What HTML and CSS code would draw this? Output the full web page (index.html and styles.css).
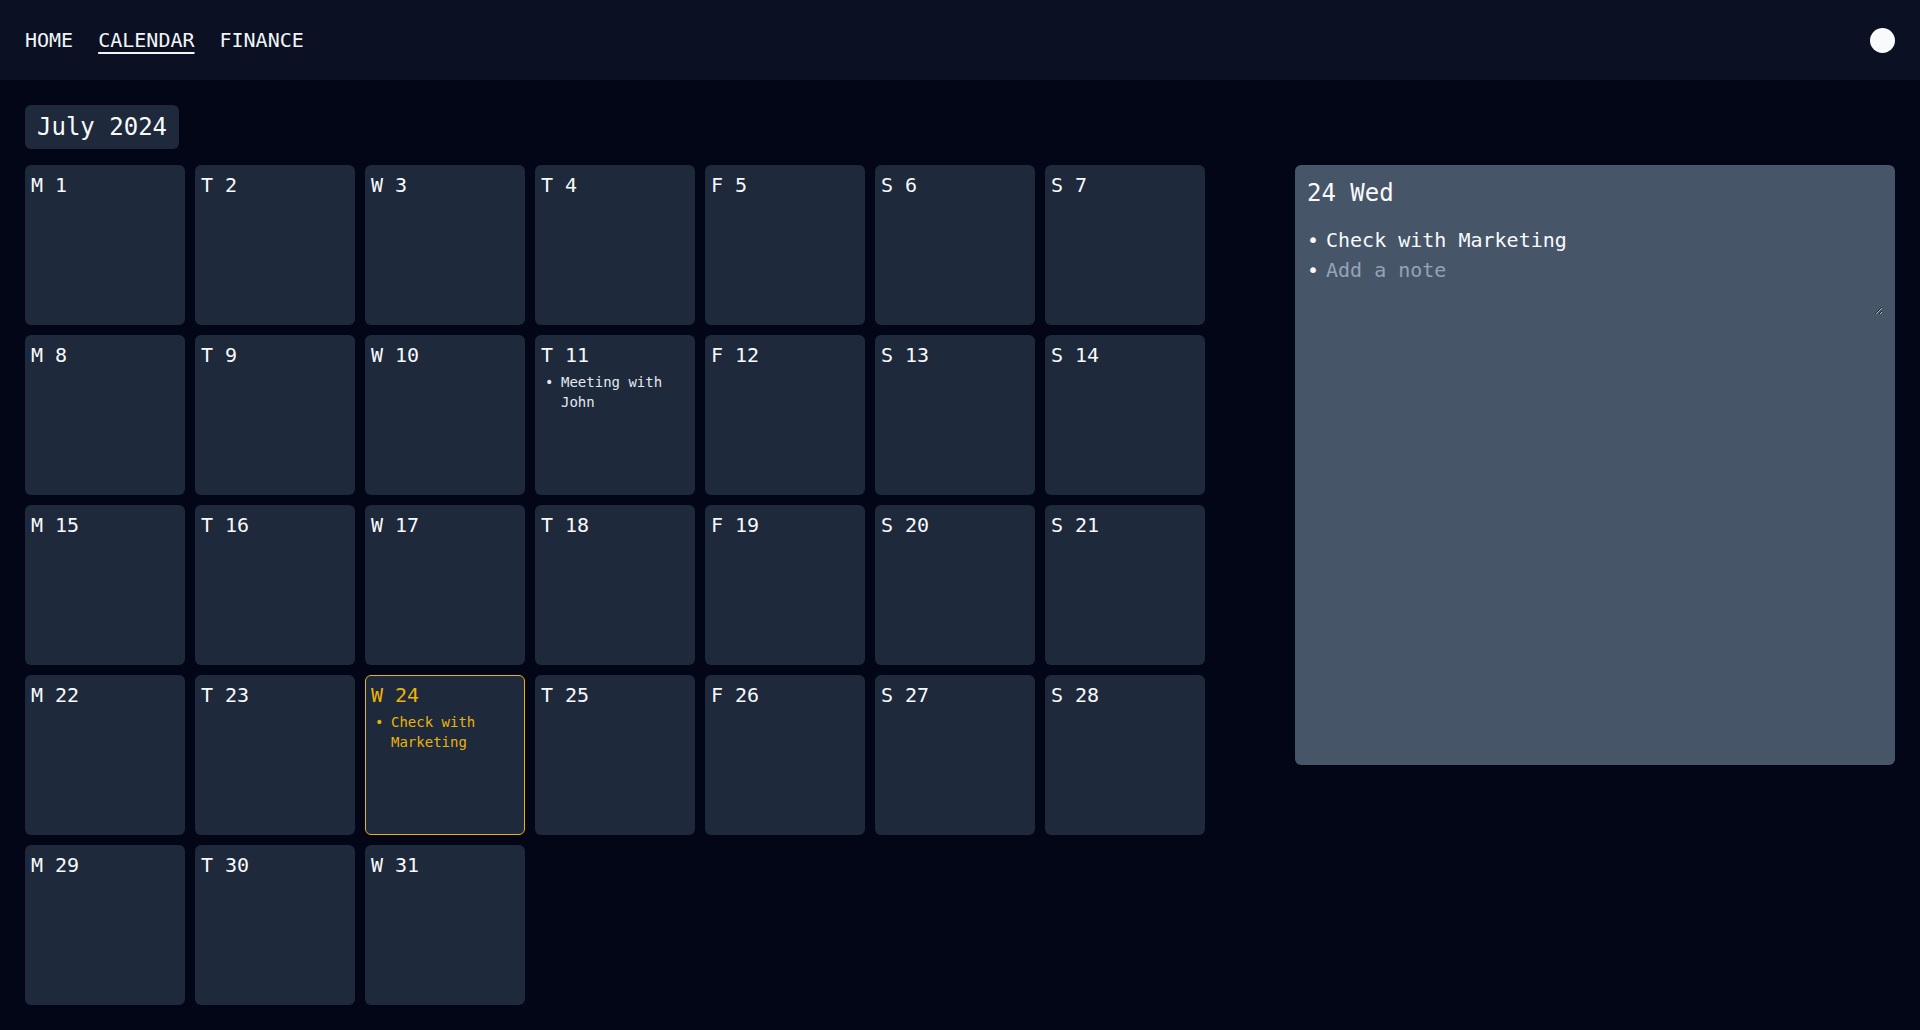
FILE: index.html
```html
<!DOCTYPE html>
<html lang="en">
  <head>
    <meta charset="UTF-8" />
    <title>Calendar</title>
    <link rel="stylesheet" href="styles.css">
  </head>
  <body>
    <!-- Top navigation -->
    <div id="header">
      <nav class="nav">
        <a href="#">HOME</a>
        <a href="#" class="active">CALENDAR</a>
        <a href="#">FINANCE</a>
      </nav>
      <div class="avatar"></div>
    </div>

    <div id="main">
      <div class="month">July 2024</div>

      <div class="layout">
        <div class="grid">
          <div class="day"><div class="day-title">M 1</div></div>
          <div class="day"><div class="day-title">T 2</div></div>
          <div class="day"><div class="day-title">W 3</div></div>
          <div class="day"><div class="day-title">T 4</div></div>
          <div class="day"><div class="day-title">F 5</div></div>
          <div class="day"><div class="day-title">S 6</div></div>
          <div class="day"><div class="day-title">S 7</div></div>

          <div class="day"><div class="day-title">M 8</div></div>
          <div class="day"><div class="day-title">T 9</div></div>
          <div class="day"><div class="day-title">W 10</div></div>
          <div class="day">
            <div class="day-title">T 11</div>
            <ul class="events">
              <li>Meeting with John</li>
            </ul>
          </div>
          <div class="day"><div class="day-title">F 12</div></div>
          <div class="day"><div class="day-title">S 13</div></div>
          <div class="day"><div class="day-title">S 14</div></div>

          <div class="day"><div class="day-title">M 15</div></div>
          <div class="day"><div class="day-title">T 16</div></div>
          <div class="day"><div class="day-title">W 17</div></div>
          <div class="day"><div class="day-title">T 18</div></div>
          <div class="day"><div class="day-title">F 19</div></div>
          <div class="day"><div class="day-title">S 20</div></div>
          <div class="day"><div class="day-title">S 21</div></div>

          <div class="day"><div class="day-title">M 22</div></div>
          <div class="day"><div class="day-title">T 23</div></div>
          <div class="day selected">
            <div class="day-title">W 24</div>
            <ul class="events">
              <li>Check with Marketing</li>
            </ul>
          </div>
          <div class="day"><div class="day-title">T 25</div></div>
          <div class="day"><div class="day-title">F 26</div></div>
          <div class="day"><div class="day-title">S 27</div></div>
          <div class="day"><div class="day-title">S 28</div></div>

          <div class="day"><div class="day-title">M 29</div></div>
          <div class="day"><div class="day-title">T 30</div></div>
          <div class="day"><div class="day-title">W 31</div></div>
        </div>

        <!-- Detail panel for the selected day -->
        <div class="panel">
          <h2>24 Wed</h2>
          <ul class="notes">
            <li>Check with Marketing</li>
            <li><textarea placeholder="Add a note"></textarea></li>
          </ul>
        </div>
      </div>
    </div>
  </body>
</html>
```

FILE: styles.css
```css
body {
  font-family: "DejaVu Sans Mono", "Liberation Mono", monospace;
  background-color: #020617;
  color: #f8fafc;
  margin: 0;
}
/* Header */
#header {
  height: 80px;
  padding: 0 25px;
  background-color: #0b1122;
  display: flex;
  align-items: center;
  justify-content: space-between;
}
.nav {
  display: flex;
  gap: 25px;
  font-size: 20px;
  line-height: 28px;
}
.nav a {
  color: #f1f5f9;
  text-decoration: none;
}
.nav a.active {
  text-decoration: underline;
  text-decoration-thickness: 2px;
  text-underline-offset: 5px;
}
.avatar {
  width: 25px;
  height: 25px;
  border-radius: 50%;
  background-color: #f8fafc;
}
#main {
  padding: 25px;
}
.month {
  display: inline-block;
  background-color: #1e293b;
  border-radius: 6px;
  padding: 6px 12px;
  font-size: 24px;
  line-height: 32px;
}
.layout {
  margin-top: 16px;
  display: flex;
  justify-content: space-between;
  align-items: flex-start;
}
.grid {
  display: grid;
  grid-template-columns: repeat(7, 160px);
  grid-auto-rows: 160px;
  gap: 10px;
}
.day {
  box-sizing: border-box;
  background-color: #1e293b;
  border-radius: 6px;
  padding: 6px;
}
.day-title {
  font-size: 20px;
  line-height: 28px;
}
.day.selected {
  border: 1px solid #eab308;
  padding: 5px;
  color: #eab308;
}
.events {
  list-style: none;
  margin: 3px 0 0;
  padding: 0 0 0 4px;
  font-size: 14px;
  line-height: 20px;
  color: #e2e8f0;
}
.selected .events {
  color: #eab308;
}
.events li {
  display: flex;
}
.events li::before {
  content: "•";
  flex: 0 0 16px;
}
/* Right side panel */
.panel {
  box-sizing: border-box;
  width: 600px;
  height: 600px;
  background-color: #475569;
  border-radius: 6px;
  padding: 12px;
}
.panel h2 {
  margin: 0;
  font-size: 24px;
  line-height: 32px;
  font-weight: normal;
}
.notes {
  list-style: none;
  margin: 16px 0 0;
  padding: 0;
  font-size: 20px;
  line-height: 30px;
}
.notes li {
  display: flex;
}
.notes li::before {
  content: "•";
  flex: 0 0 19px;
}
.notes textarea {
  flex: 1;
  height: 60px;
  padding: 0;
  border: none;
  outline: none;
  background: transparent;
  color: #f8fafc;
  font-family: inherit;
  font-size: 20px;
  line-height: 30px;
}
.notes textarea::placeholder {
  color: #94a3b8;
}
```
